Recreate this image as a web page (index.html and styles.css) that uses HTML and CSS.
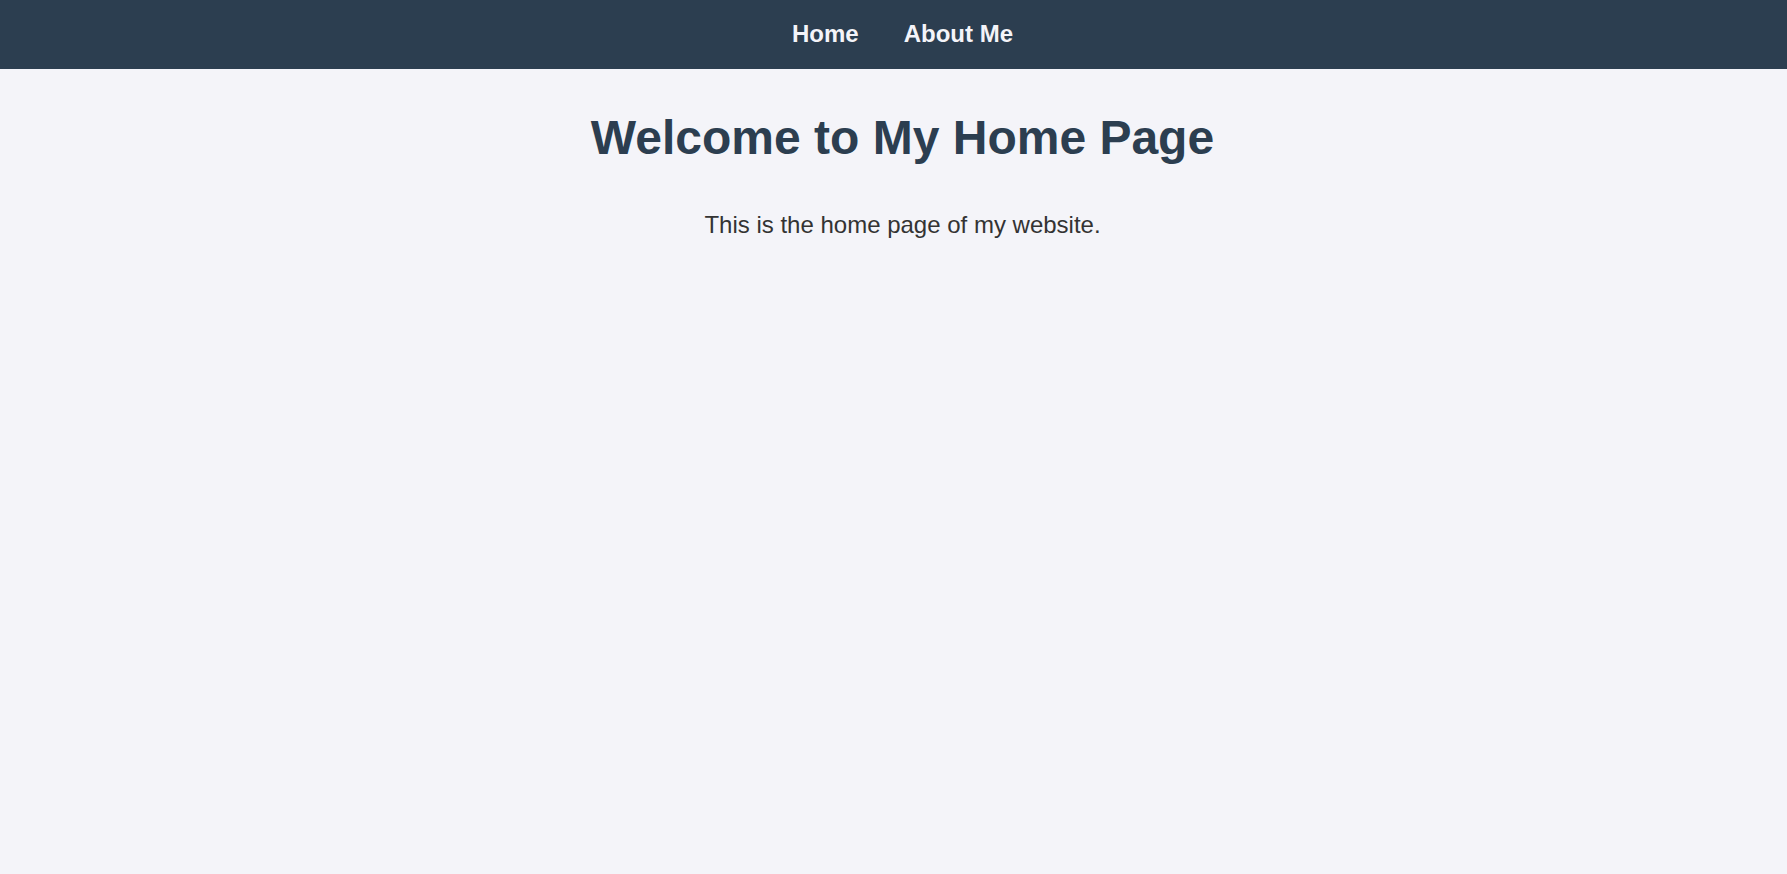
FILE: index.html
```html
<!DOCTYPE html>
<html lang="en">
<head>
<meta charset="utf-8">
<title>Home</title>
<link rel="stylesheet" href="styles.css">
</head>
<body>
<nav class="topnav">
  <ul class="nav-list">
    <li><a class="nav-link" href="#">Home</a></li>
    <li><a class="nav-link" href="#">About Me</a></li>
  </ul>
</nav>
<main class="content">
  <h1 class="title">Welcome to My Home Page</h1>
  <p class="intro">This is the home page of my website.</p>
</main>
</body>
</html>
```

FILE: styles.css
```css
html, body {
  margin: 0;
  padding: 0;
}
body {
  background: #f4f4f9;
  font-family: "Liberation Sans", Arial, sans-serif;
  color: #333;
  min-height: 100vh;
}
.topnav {
  background: #2c3e50;
  height: 69px;
  box-sizing: border-box;
  display: flex;
  align-items: center;
  justify-content: center;
  padding: 0 0 2px 18px;
}
.nav-list {
  list-style: none;
  margin: 0;
  padding: 0;
  display: flex;
  gap: 45px;
}
.nav-link {
  color: #f4f4f9;
  text-decoration: none;
  font-size: 24px;
  font-weight: bold;
}
.content {
  text-align: center;
  padding: 41px 0 0 18px;
}
.title {
  margin: 0 0 46px;
  font-size: 48px;
  font-weight: bold;
  color: #2c3e50;
}
.intro {
  margin: 0;
  font-size: 24px;
  color: #333;
}
```
